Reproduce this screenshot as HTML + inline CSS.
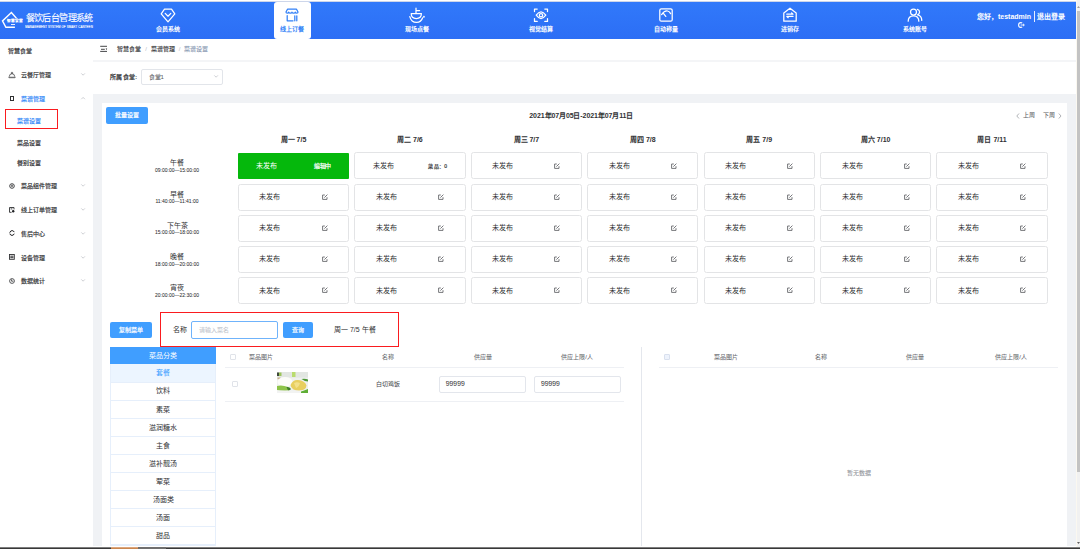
<!DOCTYPE html><html lang="zh-CN"><head><meta charset="utf-8"><style>
html,body{margin:0;padding:0;width:1080px;height:549px;overflow:hidden;background:#fff;font-family:"Liberation Sans", sans-serif;position:relative}
.t{position:absolute;white-space:nowrap;-webkit-text-stroke:0.05px currentColor}
.b{position:absolute;box-sizing:border-box}
svg{position:absolute;overflow:visible}
</style></head><body>
<div class="b" style="left:0px;top:1px;width:1076px;height:1px;background:#cdd6ea"></div>
<div class="b" style="left:0px;top:2px;width:1076px;height:37px;background:linear-gradient(#3179fa,#2c6ef5)"></div>
<svg style="left:0;top:0" width="30" height="39" viewBox="0 0 30 39"><path d="M16.4 18.3 L11.4 12.6 L2.5 20.9 L5.9 27.3 L14.9 27.3" fill="none" stroke="#fff" stroke-width="1.4" stroke-linejoin="miter"/></svg>
<div class="t" style="left:6.9px;top:19.7px;font-size:3.6px;line-height:3.6px;color:#fff;-webkit-text-stroke:0.25px #fff;letter-spacing:0.1px;">智慧食堂</div>
<div class="b" style="left:11.4px;top:23.9px;width:3.5px;height:1.3px;background:#fff;opacity:.9"></div>
<div class="t" style="left:25.7px;top:13.6px;font-size:9px;line-height:9px;color:#fff;-webkit-text-stroke:0;letter-spacing:-0.6px;-webkit-text-stroke:0.12px #fff;">餐饮后台管理系统</div>
<div class="t" style="left:25.2px;top:26.1px;font-size:2.9px;line-height:2.9px;color:#fff;letter-spacing:0.12px;-webkit-text-stroke:0.1px #fff;">MANAGEMENT SYSTEM OF SMART CANTEEN</div>
<div class="b" style="left:274px;top:1.5px;width:37px;height:37px;background:#fff;border-radius:3px"></div>
<div class="t" style="left:68.0px;width:200px;text-align:center;top:26px;font-size:6px;line-height:6px;color:#fff;font-weight:bold;-webkit-text-stroke:0;">会员系统</div>
<div class="t" style="left:192.45px;width:200px;text-align:center;top:26px;font-size:6px;line-height:6px;color:#3584f7;font-weight:bold;-webkit-text-stroke:0;">线上订餐</div>
<div class="t" style="left:316.9px;width:200px;text-align:center;top:26px;font-size:6px;line-height:6px;color:#fff;font-weight:bold;-webkit-text-stroke:0;">现场点餐</div>
<div class="t" style="left:441.35px;width:200px;text-align:center;top:26px;font-size:6px;line-height:6px;color:#fff;font-weight:bold;-webkit-text-stroke:0;">视觉结算</div>
<div class="t" style="left:565.8px;width:200px;text-align:center;top:26px;font-size:6px;line-height:6px;color:#fff;font-weight:bold;-webkit-text-stroke:0;">自动称量</div>
<div class="t" style="left:690.25px;width:200px;text-align:center;top:26px;font-size:6px;line-height:6px;color:#fff;font-weight:bold;-webkit-text-stroke:0;">进销存</div>
<div class="t" style="left:814.7px;width:200px;text-align:center;top:26px;font-size:6px;line-height:6px;color:#fff;font-weight:bold;-webkit-text-stroke:0;">系统账号</div>
<svg style="left:160.0px;top:7px" width="16" height="16" viewBox="0 0 16 16" fill="none" stroke="#fff" stroke-width="1.25" stroke-linecap="round" stroke-linejoin="round"><path d="M4.5 2.2 H11.5 L14.8 6.8 L8 14.8 L1.2 6.8 Z"/><path d="M5.2 6.4 L8 9.2 L10.8 6.4"/></svg>
<svg style="left:284.45px;top:7px" width="16" height="16" viewBox="0 0 16 16" fill="none" stroke="#3280f7" stroke-width="1.25" stroke-linecap="round" stroke-linejoin="round"><path d="M3.5 2.2 H12.5 L14 5 Q14 6.2 12.8 6.2 Q11.5 6.2 11.3 5.2 Q11 6.2 9.6 6.2 Q8.3 6.2 8 5.2 Q7.7 6.2 6.4 6.2 Q5 6.2 4.7 5.2 Q4.5 6.2 3.2 6.2 Q2 6.2 2 5 Z"/><path d="M3.2 8.5 V13.8 H9"/><path d="M10.8 8.8 V13.8 M12.8 8.8 V13.8"/></svg>
<svg style="left:408.9px;top:7px" width="16" height="16" viewBox="0 0 16 16" fill="none" stroke="#fff" stroke-width="1.25" stroke-linecap="round" stroke-linejoin="round"><path d="M7 1.2 V6.2 M7 3.6 H10.6"/><path d="M2.2 6.6 H12.4 Q12.4 11.6 7.3 11.6 Q2.2 11.6 2.2 6.6 Z"/><path d="M0.8 9.6 Q2.2 15.4 7.6 15.4 Q12.2 15.4 13.6 10.8"/><circle cx="14.9" cy="9.7" r="0.35"/></svg>
<svg style="left:533.35px;top:7px" width="16" height="16" viewBox="0 0 16 16" fill="none" stroke="#fff" stroke-width="1.25" stroke-linecap="round" stroke-linejoin="round"><path d="M1.5 4.6 V2 H4.2 M11.8 2 H14.5 V4.6 M14.5 11.6 V14.4 H11.8 M4.2 14.4 H1.5 V11.6"/><path d="M3.2 8.2 Q8 1.6 12.8 8.2 Q8 14.8 3.2 8.2 Z"/><circle cx="8" cy="8.2" r="1.7"/></svg>
<svg style="left:657.8px;top:7px" width="16" height="16" viewBox="0 0 16 16" fill="none" stroke="#fff" stroke-width="1.25" stroke-linecap="round" stroke-linejoin="round"><rect x="1.8" y="1.8" width="12.4" height="12.4" rx="1.5"/><path d="M3.6 7.6 Q6.5 3.4 9.5 4 Q11.6 4.6 12.6 6.6"/><path d="M5.6 6.6 L7.8 9.4"/></svg>
<svg style="left:782.25px;top:7px" width="16" height="16" viewBox="0 0 16 16" fill="none" stroke="#fff" stroke-width="1.25" stroke-linecap="round" stroke-linejoin="round"><path d="M1.8 6 L8 1.2 L14.2 6 V14.2 H1.8 Z"/><path d="M4.8 7.2 H11 L9.6 5.9 M11 9.4 H4.8 L6.2 10.7"/></svg>
<svg style="left:906.7px;top:7px" width="16" height="16" viewBox="0 0 16 16" fill="none" stroke="#fff" stroke-width="1.25" stroke-linecap="round" stroke-linejoin="round"><circle cx="6.5" cy="5" r="3"/><path d="M1.2 14.2 Q1.2 8.8 6.5 8.8 Q11.8 8.8 11.8 14.2"/><path d="M10.4 2.4 Q12.6 3 12.6 5 Q12.6 7 10.6 7.8 Q14.6 8.6 14.8 13.4"/></svg>
<div class="t" style="left:977px;top:13px;font-size:7px;line-height:7px;color:#fff;font-weight:bold;-webkit-text-stroke:0;">您好，<b>testadmin</b></div>
<div class="b" style="left:1033.8px;top:11px;width:1px;height:10.5px;background:#e8eeff"></div>
<div class="t" style="left:1037px;top:13px;font-size:7px;line-height:7px;color:#fff;font-weight:bold;-webkit-text-stroke:0;">退出登录</div>
<svg style="left:1017.5px;top:21.5px" width="7" height="6" viewBox="0 0 7 6" fill="none" stroke="#fff" stroke-width="1.1"><path d="M4.2 1.2 Q3.6 0.6 2.8 0.6 Q0.6 0.6 0.6 3 Q0.6 5.4 2.8 5.4 Q3.6 5.4 4.2 4.8"/><path d="M2.6 3 H6.2 M5 1.8 L6.3 3 L5 4.2" stroke-width="0.9"/></svg>
<div class="b" style="left:1076px;top:0px;width:4px;height:549px;background:#f1f1f1;border-left:1px solid #fbf8f0"></div>
<div class="b" style="left:1077px;top:11px;width:3px;height:461px;background:#c3c3c3"></div>
<svg style="left:1077px;top:5px" width="3" height="4"><path d="M0 3 L1.5 1 L3 3 Z" fill="#a0a0a0"/></svg>
<svg style="left:1077px;top:541px" width="3" height="4"><path d="M0 1 L1.5 3 L3 1 Z" fill="#606060"/></svg>
<div class="t" style="left:8px;top:48px;font-size:6px;line-height:6px;color:#303133;-webkit-text-stroke:0.16px currentColor;">智慧食堂</div>
<svg style="left:7.5px;top:70.5px" width="8" height="8" viewBox="0 0 8 8" fill="none" stroke="#303133" stroke-width="0.7"><circle cx="4" cy="1.9" r="0.7"/><path d="M1.3 5.6 A2.7 2.9 0 0 1 6.7 5.6"/><path d="M0.5 6.3 H7.5" stroke-width="0.9"/><path d="M1 7 H7" stroke-width="0.5" stroke="#888"/></svg>
<div class="t" style="left:21.4px;top:72px;font-size:6px;line-height:6px;color:#303133;-webkit-text-stroke:0.16px currentColor;">云餐厅管理</div>
<svg style="left:80.5px;top:72.7px" width="5" height="3"><path d="M0.3 0.4 L2.1 2.2 L3.9 0.4" fill="none" stroke="#b4b7bd" stroke-width="0.65"/></svg>
<div class="b" style="left:9.6px;top:95.9px;width:4.6px;height:5px;border:1px solid #303133;border-left-width:1.7px"></div>
<div class="t" style="left:21px;top:96px;font-size:6px;line-height:6px;color:#2f86f8;-webkit-text-stroke:0.16px currentColor;">菜谱管理</div>
<svg style="left:80.5px;top:96.7px" width="5" height="3"><path d="M0.3 2.2 L2.1 0.4 L3.9 2.2" fill="none" stroke="#b4b7bd" stroke-width="0.65"/></svg>
<div class="b" style="left:4.5px;top:109.2px;width:53.5px;height:19.8px;border:1.5px solid #fa1b1f"></div>
<div class="t" style="left:17.2px;top:118px;font-size:6px;line-height:6px;color:#2f86f8;-webkit-text-stroke:0.16px currentColor;">菜谱设置</div>
<div class="t" style="left:17.2px;top:139.5px;font-size:6px;line-height:6px;color:#303133;-webkit-text-stroke:0.16px currentColor;">菜品设置</div>
<div class="t" style="left:17.2px;top:160.3px;font-size:6px;line-height:6px;color:#303133;-webkit-text-stroke:0.16px currentColor;">餐别设置</div>
<div class="t" style="left:21.4px;top:182.8px;font-size:6px;line-height:6px;color:#303133;-webkit-text-stroke:0.16px currentColor;">菜品组件管理</div>
<svg style="left:80.5px;top:184.0px" width="5" height="3"><path d="M0.3 0.4 L2.1 2.2 L3.9 0.4" fill="none" stroke="#b4b7bd" stroke-width="0.65"/></svg>
<div class="t" style="left:21.4px;top:207.2px;font-size:6px;line-height:6px;color:#303133;-webkit-text-stroke:0.16px currentColor;">线上订单管理</div>
<svg style="left:80.5px;top:208.39999999999998px" width="5" height="3"><path d="M0.3 0.4 L2.1 2.2 L3.9 0.4" fill="none" stroke="#b4b7bd" stroke-width="0.65"/></svg>
<div class="t" style="left:21.4px;top:231px;font-size:6px;line-height:6px;color:#303133;-webkit-text-stroke:0.16px currentColor;">售后中心</div>
<svg style="left:80.5px;top:232.2px" width="5" height="3"><path d="M0.3 0.4 L2.1 2.2 L3.9 0.4" fill="none" stroke="#b4b7bd" stroke-width="0.65"/></svg>
<div class="t" style="left:21.4px;top:254.5px;font-size:6px;line-height:6px;color:#303133;-webkit-text-stroke:0.16px currentColor;">设备管理</div>
<svg style="left:80.5px;top:255.7px" width="5" height="3"><path d="M0.3 0.4 L2.1 2.2 L3.9 0.4" fill="none" stroke="#b4b7bd" stroke-width="0.65"/></svg>
<div class="t" style="left:21.4px;top:278px;font-size:6px;line-height:6px;color:#303133;-webkit-text-stroke:0.16px currentColor;">数据统计</div>
<svg style="left:80.5px;top:279.2px" width="5" height="3"><path d="M0.3 0.4 L2.1 2.2 L3.9 0.4" fill="none" stroke="#b4b7bd" stroke-width="0.65"/></svg>
<svg style="left:8.6px;top:182.5px" width="6" height="6" viewBox="0 0 6 6" fill="none" stroke="#303133" stroke-width="0.9"><circle cx="3" cy="3" r="2.3"/><path d="M3 1.6 V3.6 M2 3 H4" stroke-width="0.8"/></svg>
<svg style="left:8.8px;top:206.6px" width="6" height="6" viewBox="0 0 6 6" fill="none" stroke="#303133" stroke-width="0.9"><path d="M5 2.4 V0.5 H0.5 V5.3 H2.6"/><circle cx="4.2" cy="4.3" r="1.2" fill="#202124" stroke="none"/><path d="M1.6 1.9 H3.4"/></svg>
<svg style="left:8.8px;top:230px" width="6" height="6" viewBox="0 0 6 6" fill="none" stroke="#202124" stroke-width="1"><path d="M0.9 2.3 Q1.6 0.6 3.1 0.6 Q4.6 0.6 5.2 2.1 M5.2 3.7 Q4.6 5.4 3 5.4 Q1.5 5.4 0.9 3.9"/><path d="M0.4 2.9 H1.4" stroke-width="0.8"/></svg>
<svg style="left:8.8px;top:253.6px" width="6" height="6" viewBox="0 0 6 6" fill="none" stroke="#303133" stroke-width="0.9"><rect x="0.5" y="0.5" width="4.8" height="4.8"/><path d="M1.3 2.2 H4.5 M1.3 3.7 H4.5" stroke-width="1"/></svg>
<svg style="left:8.8px;top:277.5px" width="6" height="6" viewBox="0 0 6 6" fill="none" stroke="#303133" stroke-width="0.8"><circle cx="3" cy="3" r="2.4"/><path d="M2.6 1.4 V3.2 H4.3"/></svg>
<svg style="left:100px;top:45px" width="8" height="8" viewBox="0 0 8 8" fill="none" stroke="#303133" stroke-width="0.9"><path d="M0.2 1.3 H7 M1 4.3 H4.8 M0.2 6.4 H7"/><path d="M5.6 3.4 H7.2 L6.4 5 Z" fill="#202020" stroke="none"/></svg>
<div class="t" style="left:117.4px;top:46px;font-size:6px;line-height:6px;color:#303133;-webkit-text-stroke:0.1px currentColor;">智慧食堂</div>
<div class="t" style="left:145.3px;top:46px;font-size:6px;line-height:6px;color:#c0c4cc;">/</div>
<div class="t" style="left:150.7px;top:46px;font-size:6px;line-height:6px;color:#303133;-webkit-text-stroke:0.1px currentColor;">菜谱管理</div>
<div class="t" style="left:178.7px;top:46px;font-size:6px;line-height:6px;color:#c0c4cc;">/</div>
<div class="t" style="left:184px;top:46px;font-size:6px;line-height:6px;color:#8a9ab3;-webkit-text-stroke:0.12px currentColor;">菜谱设置</div>
<div class="b" style="left:93px;top:60px;width:983px;height:1.5px;background:#f4f5f7"></div>
<div class="t" style="left:110px;top:74px;font-size:6px;line-height:6px;color:#303133;-webkit-text-stroke:0.22px currentColor;letter-spacing:0.3px;">所属食堂:</div>
<div class="b" style="left:141px;top:69.3px;width:81.7px;height:16.2px;border:1px solid #e2e5ea;border-radius:2px"></div>
<div class="t" style="left:148.5px;top:74px;font-size:6px;line-height:6px;color:#606266;">食堂1</div>
<svg style="left:214.3px;top:75.3px" width="5" height="3"><path d="M0.3 0.4 L2.1 2.2 L3.9 0.4" fill="none" stroke="#b4b7bd" stroke-width="0.65"/></svg>
<div class="b" style="left:93px;top:94px;width:983px;height:455px;background:#f0f2f5"></div>
<div class="b" style="left:102px;top:103px;width:965px;height:446px;background:#fff"></div>
<div class="b" style="left:106.2px;top:106.7px;width:41.7px;height:17.3px;background:#409eff;border-radius:2px"></div>
<div class="t" style="left:27.0px;width:200px;text-align:center;top:112.3px;font-size:6px;line-height:6px;color:#fff;-webkit-text-stroke:0.2px #fff;">批量设置</div>
<div class="t" style="left:481.29999999999995px;width:200px;text-align:center;top:111.5px;font-size:7px;line-height:7px;color:#303133;font-weight:bold;-webkit-text-stroke:0;letter-spacing:-0.1px;">2021年07月05日-2021年07月11日</div>
<svg style="left:1016px;top:112.5px" width="4" height="6"><path d="M3 0.5 L0.8 3 L3 5.5" fill="none" stroke="#909399" stroke-width="0.7"/></svg>
<div class="t" style="left:1022.8px;top:112px;font-size:6px;line-height:6px;color:#606266;">上周</div>
<div class="t" style="left:1043.3px;top:112px;font-size:6px;line-height:6px;color:#606266;">下周</div>
<svg style="left:1058px;top:112.5px" width="4" height="6"><path d="M0.8 0.5 L3 3 L0.8 5.5" fill="none" stroke="#909399" stroke-width="0.7"/></svg>
<div class="t" style="left:193.5px;width:200px;text-align:center;top:136px;font-size:7px;line-height:7px;color:#303133;font-weight:bold;-webkit-text-stroke:0;">周一 7/5</div>
<div class="t" style="left:309.93000000000006px;width:200px;text-align:center;top:136px;font-size:7px;line-height:7px;color:#303133;font-weight:bold;-webkit-text-stroke:0;">周二 7/6</div>
<div class="t" style="left:426.36px;width:200px;text-align:center;top:136px;font-size:7px;line-height:7px;color:#303133;font-weight:bold;-webkit-text-stroke:0;">周三 7/7</div>
<div class="t" style="left:542.7900000000001px;width:200px;text-align:center;top:136px;font-size:7px;line-height:7px;color:#303133;font-weight:bold;-webkit-text-stroke:0;">周四 7/8</div>
<div class="t" style="left:659.22px;width:200px;text-align:center;top:136px;font-size:7px;line-height:7px;color:#303133;font-weight:bold;-webkit-text-stroke:0;">周五 7/9</div>
<div class="t" style="left:775.6500000000001px;width:200px;text-align:center;top:136px;font-size:7px;line-height:7px;color:#303133;font-weight:bold;-webkit-text-stroke:0;">周六 7/10</div>
<div class="t" style="left:892.08px;width:200px;text-align:center;top:136px;font-size:7px;line-height:7px;color:#303133;font-weight:bold;-webkit-text-stroke:0;">周日 7/11</div>
<div class="t" style="left:77.0px;width:200px;text-align:center;top:159.3px;font-size:7px;line-height:7px;color:#303133;-webkit-text-stroke:0;">午餐</div>
<div class="t" style="left:77.0px;width:200px;text-align:center;top:167.9px;font-size:5px;line-height:5px;color:#303133;">09:00:00—15:00:00</div>
<div class="b" style="left:237.9px;top:153.0px;width:111.2px;height:26.1px;background:#05b80c;border-radius:1px;display:flex;justify-content:space-around;align-items:center"><span style="font-size:7px;line-height:7px;color:#fff;position:relative;top:-0.6px">未发布</span><span style="font-size:6px;line-height:6px;color:#fff;letter-spacing:-0.5px;position:relative;top:-0.2px;-webkit-text-stroke:0.2px #fff">编辑中</span></div>
<div class="b" style="left:354.33000000000004px;top:152.3px;width:111.2px;height:27px;background:#fff;border:1px solid #e3e4e6;border-radius:2.5px;display:flex;justify-content:space-around;align-items:center"><span style="font-size:7px;line-height:7px;color:#303133;position:relative;top:-0.6px">未发布</span><span style="font-size:5px;line-height:5px;color:#303133;letter-spacing:0.25px;position:relative;top:0.4px;-webkit-text-stroke:0.2px #303133">菜品：0</span></div>
<div class="b" style="left:470.76px;top:152.3px;width:111.2px;height:27px;background:#fff;border:1px solid #e3e4e6;border-radius:2.5px;display:flex;justify-content:space-around;align-items:center"><span style="font-size:7px;line-height:7px;color:#303133;position:relative;top:-0.6px">未发布</span><svg width="6" height="6" viewBox="0 0 6 6" style="position:relative;top:-0.3px;display:block" fill="none" stroke="#66686c" stroke-width="0.9"><path d="M5 3.2 V5.4 H0.6 V1 H2.8"/><path d="M2.4 3.6 L5.4 0.6"/></svg></div>
<div class="b" style="left:587.19px;top:152.3px;width:111.2px;height:27px;background:#fff;border:1px solid #e3e4e6;border-radius:2.5px;display:flex;justify-content:space-around;align-items:center"><span style="font-size:7px;line-height:7px;color:#303133;position:relative;top:-0.6px">未发布</span><svg width="6" height="6" viewBox="0 0 6 6" style="position:relative;top:-0.3px;display:block" fill="none" stroke="#66686c" stroke-width="0.9"><path d="M5 3.2 V5.4 H0.6 V1 H2.8"/><path d="M2.4 3.6 L5.4 0.6"/></svg></div>
<div class="b" style="left:703.62px;top:152.3px;width:111.2px;height:27px;background:#fff;border:1px solid #e3e4e6;border-radius:2.5px;display:flex;justify-content:space-around;align-items:center"><span style="font-size:7px;line-height:7px;color:#303133;position:relative;top:-0.6px">未发布</span><svg width="6" height="6" viewBox="0 0 6 6" style="position:relative;top:-0.3px;display:block" fill="none" stroke="#66686c" stroke-width="0.9"><path d="M5 3.2 V5.4 H0.6 V1 H2.8"/><path d="M2.4 3.6 L5.4 0.6"/></svg></div>
<div class="b" style="left:820.0500000000001px;top:152.3px;width:111.2px;height:27px;background:#fff;border:1px solid #e3e4e6;border-radius:2.5px;display:flex;justify-content:space-around;align-items:center"><span style="font-size:7px;line-height:7px;color:#303133;position:relative;top:-0.6px">未发布</span><svg width="6" height="6" viewBox="0 0 6 6" style="position:relative;top:-0.3px;display:block" fill="none" stroke="#66686c" stroke-width="0.9"><path d="M5 3.2 V5.4 H0.6 V1 H2.8"/><path d="M2.4 3.6 L5.4 0.6"/></svg></div>
<div class="b" style="left:936.48px;top:152.3px;width:111.2px;height:27px;background:#fff;border:1px solid #e3e4e6;border-radius:2.5px;display:flex;justify-content:space-around;align-items:center"><span style="font-size:7px;line-height:7px;color:#303133;position:relative;top:-0.6px">未发布</span><svg width="6" height="6" viewBox="0 0 6 6" style="position:relative;top:-0.3px;display:block" fill="none" stroke="#66686c" stroke-width="0.9"><path d="M5 3.2 V5.4 H0.6 V1 H2.8"/><path d="M2.4 3.6 L5.4 0.6"/></svg></div>
<div class="t" style="left:77.0px;width:200px;text-align:center;top:190.5px;font-size:7px;line-height:7px;color:#303133;-webkit-text-stroke:0;">早餐</div>
<div class="t" style="left:77.0px;width:200px;text-align:center;top:199.1px;font-size:5px;line-height:5px;color:#303133;">11:40:00—11:41:00</div>
<div class="b" style="left:237.9px;top:183.5px;width:111.2px;height:27px;background:#fff;border:1px solid #e3e4e6;border-radius:2.5px;display:flex;justify-content:space-around;align-items:center"><span style="font-size:7px;line-height:7px;color:#303133;position:relative;top:-0.6px">未发布</span><svg width="6" height="6" viewBox="0 0 6 6" style="position:relative;top:-0.3px;display:block" fill="none" stroke="#66686c" stroke-width="0.9"><path d="M5 3.2 V5.4 H0.6 V1 H2.8"/><path d="M2.4 3.6 L5.4 0.6"/></svg></div>
<div class="b" style="left:354.33000000000004px;top:183.5px;width:111.2px;height:27px;background:#fff;border:1px solid #e3e4e6;border-radius:2.5px;display:flex;justify-content:space-around;align-items:center"><span style="font-size:7px;line-height:7px;color:#303133;position:relative;top:-0.6px">未发布</span><svg width="6" height="6" viewBox="0 0 6 6" style="position:relative;top:-0.3px;display:block" fill="none" stroke="#66686c" stroke-width="0.9"><path d="M5 3.2 V5.4 H0.6 V1 H2.8"/><path d="M2.4 3.6 L5.4 0.6"/></svg></div>
<div class="b" style="left:470.76px;top:183.5px;width:111.2px;height:27px;background:#fff;border:1px solid #e3e4e6;border-radius:2.5px;display:flex;justify-content:space-around;align-items:center"><span style="font-size:7px;line-height:7px;color:#303133;position:relative;top:-0.6px">未发布</span><svg width="6" height="6" viewBox="0 0 6 6" style="position:relative;top:-0.3px;display:block" fill="none" stroke="#66686c" stroke-width="0.9"><path d="M5 3.2 V5.4 H0.6 V1 H2.8"/><path d="M2.4 3.6 L5.4 0.6"/></svg></div>
<div class="b" style="left:587.19px;top:183.5px;width:111.2px;height:27px;background:#fff;border:1px solid #e3e4e6;border-radius:2.5px;display:flex;justify-content:space-around;align-items:center"><span style="font-size:7px;line-height:7px;color:#303133;position:relative;top:-0.6px">未发布</span><svg width="6" height="6" viewBox="0 0 6 6" style="position:relative;top:-0.3px;display:block" fill="none" stroke="#66686c" stroke-width="0.9"><path d="M5 3.2 V5.4 H0.6 V1 H2.8"/><path d="M2.4 3.6 L5.4 0.6"/></svg></div>
<div class="b" style="left:703.62px;top:183.5px;width:111.2px;height:27px;background:#fff;border:1px solid #e3e4e6;border-radius:2.5px;display:flex;justify-content:space-around;align-items:center"><span style="font-size:7px;line-height:7px;color:#303133;position:relative;top:-0.6px">未发布</span><svg width="6" height="6" viewBox="0 0 6 6" style="position:relative;top:-0.3px;display:block" fill="none" stroke="#66686c" stroke-width="0.9"><path d="M5 3.2 V5.4 H0.6 V1 H2.8"/><path d="M2.4 3.6 L5.4 0.6"/></svg></div>
<div class="b" style="left:820.0500000000001px;top:183.5px;width:111.2px;height:27px;background:#fff;border:1px solid #e3e4e6;border-radius:2.5px;display:flex;justify-content:space-around;align-items:center"><span style="font-size:7px;line-height:7px;color:#303133;position:relative;top:-0.6px">未发布</span><svg width="6" height="6" viewBox="0 0 6 6" style="position:relative;top:-0.3px;display:block" fill="none" stroke="#66686c" stroke-width="0.9"><path d="M5 3.2 V5.4 H0.6 V1 H2.8"/><path d="M2.4 3.6 L5.4 0.6"/></svg></div>
<div class="b" style="left:936.48px;top:183.5px;width:111.2px;height:27px;background:#fff;border:1px solid #e3e4e6;border-radius:2.5px;display:flex;justify-content:space-around;align-items:center"><span style="font-size:7px;line-height:7px;color:#303133;position:relative;top:-0.6px">未发布</span><svg width="6" height="6" viewBox="0 0 6 6" style="position:relative;top:-0.3px;display:block" fill="none" stroke="#66686c" stroke-width="0.9"><path d="M5 3.2 V5.4 H0.6 V1 H2.8"/><path d="M2.4 3.6 L5.4 0.6"/></svg></div>
<div class="t" style="left:77.0px;width:200px;text-align:center;top:221.70000000000002px;font-size:7px;line-height:7px;color:#303133;-webkit-text-stroke:0;">下午茶</div>
<div class="t" style="left:77.0px;width:200px;text-align:center;top:230.3px;font-size:5px;line-height:5px;color:#303133;">15:00:00—18:00:00</div>
<div class="b" style="left:237.9px;top:214.70000000000002px;width:111.2px;height:27px;background:#fff;border:1px solid #e3e4e6;border-radius:2.5px;display:flex;justify-content:space-around;align-items:center"><span style="font-size:7px;line-height:7px;color:#303133;position:relative;top:-0.6px">未发布</span><svg width="6" height="6" viewBox="0 0 6 6" style="position:relative;top:-0.3px;display:block" fill="none" stroke="#66686c" stroke-width="0.9"><path d="M5 3.2 V5.4 H0.6 V1 H2.8"/><path d="M2.4 3.6 L5.4 0.6"/></svg></div>
<div class="b" style="left:354.33000000000004px;top:214.70000000000002px;width:111.2px;height:27px;background:#fff;border:1px solid #e3e4e6;border-radius:2.5px;display:flex;justify-content:space-around;align-items:center"><span style="font-size:7px;line-height:7px;color:#303133;position:relative;top:-0.6px">未发布</span><svg width="6" height="6" viewBox="0 0 6 6" style="position:relative;top:-0.3px;display:block" fill="none" stroke="#66686c" stroke-width="0.9"><path d="M5 3.2 V5.4 H0.6 V1 H2.8"/><path d="M2.4 3.6 L5.4 0.6"/></svg></div>
<div class="b" style="left:470.76px;top:214.70000000000002px;width:111.2px;height:27px;background:#fff;border:1px solid #e3e4e6;border-radius:2.5px;display:flex;justify-content:space-around;align-items:center"><span style="font-size:7px;line-height:7px;color:#303133;position:relative;top:-0.6px">未发布</span><svg width="6" height="6" viewBox="0 0 6 6" style="position:relative;top:-0.3px;display:block" fill="none" stroke="#66686c" stroke-width="0.9"><path d="M5 3.2 V5.4 H0.6 V1 H2.8"/><path d="M2.4 3.6 L5.4 0.6"/></svg></div>
<div class="b" style="left:587.19px;top:214.70000000000002px;width:111.2px;height:27px;background:#fff;border:1px solid #e3e4e6;border-radius:2.5px;display:flex;justify-content:space-around;align-items:center"><span style="font-size:7px;line-height:7px;color:#303133;position:relative;top:-0.6px">未发布</span><svg width="6" height="6" viewBox="0 0 6 6" style="position:relative;top:-0.3px;display:block" fill="none" stroke="#66686c" stroke-width="0.9"><path d="M5 3.2 V5.4 H0.6 V1 H2.8"/><path d="M2.4 3.6 L5.4 0.6"/></svg></div>
<div class="b" style="left:703.62px;top:214.70000000000002px;width:111.2px;height:27px;background:#fff;border:1px solid #e3e4e6;border-radius:2.5px;display:flex;justify-content:space-around;align-items:center"><span style="font-size:7px;line-height:7px;color:#303133;position:relative;top:-0.6px">未发布</span><svg width="6" height="6" viewBox="0 0 6 6" style="position:relative;top:-0.3px;display:block" fill="none" stroke="#66686c" stroke-width="0.9"><path d="M5 3.2 V5.4 H0.6 V1 H2.8"/><path d="M2.4 3.6 L5.4 0.6"/></svg></div>
<div class="b" style="left:820.0500000000001px;top:214.70000000000002px;width:111.2px;height:27px;background:#fff;border:1px solid #e3e4e6;border-radius:2.5px;display:flex;justify-content:space-around;align-items:center"><span style="font-size:7px;line-height:7px;color:#303133;position:relative;top:-0.6px">未发布</span><svg width="6" height="6" viewBox="0 0 6 6" style="position:relative;top:-0.3px;display:block" fill="none" stroke="#66686c" stroke-width="0.9"><path d="M5 3.2 V5.4 H0.6 V1 H2.8"/><path d="M2.4 3.6 L5.4 0.6"/></svg></div>
<div class="b" style="left:936.48px;top:214.70000000000002px;width:111.2px;height:27px;background:#fff;border:1px solid #e3e4e6;border-radius:2.5px;display:flex;justify-content:space-around;align-items:center"><span style="font-size:7px;line-height:7px;color:#303133;position:relative;top:-0.6px">未发布</span><svg width="6" height="6" viewBox="0 0 6 6" style="position:relative;top:-0.3px;display:block" fill="none" stroke="#66686c" stroke-width="0.9"><path d="M5 3.2 V5.4 H0.6 V1 H2.8"/><path d="M2.4 3.6 L5.4 0.6"/></svg></div>
<div class="t" style="left:77.0px;width:200px;text-align:center;top:252.9px;font-size:7px;line-height:7px;color:#303133;-webkit-text-stroke:0;">晚餐</div>
<div class="t" style="left:77.0px;width:200px;text-align:center;top:261.5px;font-size:5px;line-height:5px;color:#303133;">18:00:00—20:00:00</div>
<div class="b" style="left:237.9px;top:245.9px;width:111.2px;height:27px;background:#fff;border:1px solid #e3e4e6;border-radius:2.5px;display:flex;justify-content:space-around;align-items:center"><span style="font-size:7px;line-height:7px;color:#303133;position:relative;top:-0.6px">未发布</span><svg width="6" height="6" viewBox="0 0 6 6" style="position:relative;top:-0.3px;display:block" fill="none" stroke="#66686c" stroke-width="0.9"><path d="M5 3.2 V5.4 H0.6 V1 H2.8"/><path d="M2.4 3.6 L5.4 0.6"/></svg></div>
<div class="b" style="left:354.33000000000004px;top:245.9px;width:111.2px;height:27px;background:#fff;border:1px solid #e3e4e6;border-radius:2.5px;display:flex;justify-content:space-around;align-items:center"><span style="font-size:7px;line-height:7px;color:#303133;position:relative;top:-0.6px">未发布</span><svg width="6" height="6" viewBox="0 0 6 6" style="position:relative;top:-0.3px;display:block" fill="none" stroke="#66686c" stroke-width="0.9"><path d="M5 3.2 V5.4 H0.6 V1 H2.8"/><path d="M2.4 3.6 L5.4 0.6"/></svg></div>
<div class="b" style="left:470.76px;top:245.9px;width:111.2px;height:27px;background:#fff;border:1px solid #e3e4e6;border-radius:2.5px;display:flex;justify-content:space-around;align-items:center"><span style="font-size:7px;line-height:7px;color:#303133;position:relative;top:-0.6px">未发布</span><svg width="6" height="6" viewBox="0 0 6 6" style="position:relative;top:-0.3px;display:block" fill="none" stroke="#66686c" stroke-width="0.9"><path d="M5 3.2 V5.4 H0.6 V1 H2.8"/><path d="M2.4 3.6 L5.4 0.6"/></svg></div>
<div class="b" style="left:587.19px;top:245.9px;width:111.2px;height:27px;background:#fff;border:1px solid #e3e4e6;border-radius:2.5px;display:flex;justify-content:space-around;align-items:center"><span style="font-size:7px;line-height:7px;color:#303133;position:relative;top:-0.6px">未发布</span><svg width="6" height="6" viewBox="0 0 6 6" style="position:relative;top:-0.3px;display:block" fill="none" stroke="#66686c" stroke-width="0.9"><path d="M5 3.2 V5.4 H0.6 V1 H2.8"/><path d="M2.4 3.6 L5.4 0.6"/></svg></div>
<div class="b" style="left:703.62px;top:245.9px;width:111.2px;height:27px;background:#fff;border:1px solid #e3e4e6;border-radius:2.5px;display:flex;justify-content:space-around;align-items:center"><span style="font-size:7px;line-height:7px;color:#303133;position:relative;top:-0.6px">未发布</span><svg width="6" height="6" viewBox="0 0 6 6" style="position:relative;top:-0.3px;display:block" fill="none" stroke="#66686c" stroke-width="0.9"><path d="M5 3.2 V5.4 H0.6 V1 H2.8"/><path d="M2.4 3.6 L5.4 0.6"/></svg></div>
<div class="b" style="left:820.0500000000001px;top:245.9px;width:111.2px;height:27px;background:#fff;border:1px solid #e3e4e6;border-radius:2.5px;display:flex;justify-content:space-around;align-items:center"><span style="font-size:7px;line-height:7px;color:#303133;position:relative;top:-0.6px">未发布</span><svg width="6" height="6" viewBox="0 0 6 6" style="position:relative;top:-0.3px;display:block" fill="none" stroke="#66686c" stroke-width="0.9"><path d="M5 3.2 V5.4 H0.6 V1 H2.8"/><path d="M2.4 3.6 L5.4 0.6"/></svg></div>
<div class="b" style="left:936.48px;top:245.9px;width:111.2px;height:27px;background:#fff;border:1px solid #e3e4e6;border-radius:2.5px;display:flex;justify-content:space-around;align-items:center"><span style="font-size:7px;line-height:7px;color:#303133;position:relative;top:-0.6px">未发布</span><svg width="6" height="6" viewBox="0 0 6 6" style="position:relative;top:-0.3px;display:block" fill="none" stroke="#66686c" stroke-width="0.9"><path d="M5 3.2 V5.4 H0.6 V1 H2.8"/><path d="M2.4 3.6 L5.4 0.6"/></svg></div>
<div class="t" style="left:77.0px;width:200px;text-align:center;top:284.1px;font-size:7px;line-height:7px;color:#303133;-webkit-text-stroke:0;">宵夜</div>
<div class="t" style="left:77.0px;width:200px;text-align:center;top:292.70000000000005px;font-size:5px;line-height:5px;color:#303133;">20:00:00—22:30:00</div>
<div class="b" style="left:237.9px;top:277.1px;width:111.2px;height:27px;background:#fff;border:1px solid #e3e4e6;border-radius:2.5px;display:flex;justify-content:space-around;align-items:center"><span style="font-size:7px;line-height:7px;color:#303133;position:relative;top:-0.6px">未发布</span><svg width="6" height="6" viewBox="0 0 6 6" style="position:relative;top:-0.3px;display:block" fill="none" stroke="#66686c" stroke-width="0.9"><path d="M5 3.2 V5.4 H0.6 V1 H2.8"/><path d="M2.4 3.6 L5.4 0.6"/></svg></div>
<div class="b" style="left:354.33000000000004px;top:277.1px;width:111.2px;height:27px;background:#fff;border:1px solid #e3e4e6;border-radius:2.5px;display:flex;justify-content:space-around;align-items:center"><span style="font-size:7px;line-height:7px;color:#303133;position:relative;top:-0.6px">未发布</span><svg width="6" height="6" viewBox="0 0 6 6" style="position:relative;top:-0.3px;display:block" fill="none" stroke="#66686c" stroke-width="0.9"><path d="M5 3.2 V5.4 H0.6 V1 H2.8"/><path d="M2.4 3.6 L5.4 0.6"/></svg></div>
<div class="b" style="left:470.76px;top:277.1px;width:111.2px;height:27px;background:#fff;border:1px solid #e3e4e6;border-radius:2.5px;display:flex;justify-content:space-around;align-items:center"><span style="font-size:7px;line-height:7px;color:#303133;position:relative;top:-0.6px">未发布</span><svg width="6" height="6" viewBox="0 0 6 6" style="position:relative;top:-0.3px;display:block" fill="none" stroke="#66686c" stroke-width="0.9"><path d="M5 3.2 V5.4 H0.6 V1 H2.8"/><path d="M2.4 3.6 L5.4 0.6"/></svg></div>
<div class="b" style="left:587.19px;top:277.1px;width:111.2px;height:27px;background:#fff;border:1px solid #e3e4e6;border-radius:2.5px;display:flex;justify-content:space-around;align-items:center"><span style="font-size:7px;line-height:7px;color:#303133;position:relative;top:-0.6px">未发布</span><svg width="6" height="6" viewBox="0 0 6 6" style="position:relative;top:-0.3px;display:block" fill="none" stroke="#66686c" stroke-width="0.9"><path d="M5 3.2 V5.4 H0.6 V1 H2.8"/><path d="M2.4 3.6 L5.4 0.6"/></svg></div>
<div class="b" style="left:703.62px;top:277.1px;width:111.2px;height:27px;background:#fff;border:1px solid #e3e4e6;border-radius:2.5px;display:flex;justify-content:space-around;align-items:center"><span style="font-size:7px;line-height:7px;color:#303133;position:relative;top:-0.6px">未发布</span><svg width="6" height="6" viewBox="0 0 6 6" style="position:relative;top:-0.3px;display:block" fill="none" stroke="#66686c" stroke-width="0.9"><path d="M5 3.2 V5.4 H0.6 V1 H2.8"/><path d="M2.4 3.6 L5.4 0.6"/></svg></div>
<div class="b" style="left:820.0500000000001px;top:277.1px;width:111.2px;height:27px;background:#fff;border:1px solid #e3e4e6;border-radius:2.5px;display:flex;justify-content:space-around;align-items:center"><span style="font-size:7px;line-height:7px;color:#303133;position:relative;top:-0.6px">未发布</span><svg width="6" height="6" viewBox="0 0 6 6" style="position:relative;top:-0.3px;display:block" fill="none" stroke="#66686c" stroke-width="0.9"><path d="M5 3.2 V5.4 H0.6 V1 H2.8"/><path d="M2.4 3.6 L5.4 0.6"/></svg></div>
<div class="b" style="left:936.48px;top:277.1px;width:111.2px;height:27px;background:#fff;border:1px solid #e3e4e6;border-radius:2.5px;display:flex;justify-content:space-around;align-items:center"><span style="font-size:7px;line-height:7px;color:#303133;position:relative;top:-0.6px">未发布</span><svg width="6" height="6" viewBox="0 0 6 6" style="position:relative;top:-0.3px;display:block" fill="none" stroke="#66686c" stroke-width="0.9"><path d="M5 3.2 V5.4 H0.6 V1 H2.8"/><path d="M2.4 3.6 L5.4 0.6"/></svg></div>
<div class="b" style="left:110px;top:321.6px;width:41.9px;height:16.7px;background:#409eff;border-radius:2px"></div>
<div class="t" style="left:31.0px;width:200px;text-align:center;top:327px;font-size:6px;line-height:6px;color:#fff;-webkit-text-stroke:0.2px #fff;">复制菜单</div>
<div class="b" style="left:160px;top:312px;width:238.8px;height:35px;border:1.6px solid #fa1b1f"></div>
<div class="t" style="left:172.6px;top:326px;font-size:7px;line-height:7px;color:#303133;-webkit-text-stroke:0;">名称</div>
<div class="b" style="left:191.1px;top:321.3px;width:87.4px;height:17.5px;border:1px solid #6fb3fb;border-radius:2px"></div>
<div class="t" style="left:198.5px;top:327px;font-size:6px;line-height:6px;color:#c0c4cc;">请输入菜名</div>
<div class="b" style="left:283px;top:321.6px;width:29.9px;height:16.7px;background:#409eff;border-radius:2px"></div>
<div class="t" style="left:198.0px;width:200px;text-align:center;top:327px;font-size:6px;line-height:6px;color:#fff;-webkit-text-stroke:0.2px #fff;">查询</div>
<div class="t" style="left:334px;top:326px;font-size:7px;line-height:7px;color:#303133;-webkit-text-stroke:0;">周一 7/5 午餐</div>
<div class="b" style="left:110px;top:347.2px;width:106.3px;height:16.4px;background:#409eff"></div>
<div class="t" style="left:63.19999999999999px;width:200px;text-align:center;top:352px;font-size:7px;line-height:7px;color:#fff;-webkit-text-stroke:0;">菜品分类</div>
<div class="b" style="left:110px;top:364px;width:106.3px;height:180.5px;border:1px solid #e6effb;border-top:none"></div>
<div class="b" style="left:111px;top:364px;width:104.3px;height:18px;background:#ecf5ff"></div>
<div class="b" style="left:110px;top:381.5px;width:106.3px;height:1px;background:#e6effb"></div>
<div class="t" style="left:63.19999999999999px;width:200px;text-align:center;top:369.3px;font-size:7px;line-height:7px;color:#409eff;-webkit-text-stroke:0;">套餐</div>
<div class="b" style="left:110px;top:399.5px;width:106.3px;height:1px;background:#e6effb"></div>
<div class="t" style="left:63.19999999999999px;width:200px;text-align:center;top:387.40000000000003px;font-size:7px;line-height:7px;color:#303133;-webkit-text-stroke:0;">饮料</div>
<div class="b" style="left:110px;top:417.5px;width:106.3px;height:1px;background:#e6effb"></div>
<div class="t" style="left:63.19999999999999px;width:200px;text-align:center;top:405.5px;font-size:7px;line-height:7px;color:#303133;-webkit-text-stroke:0;">素菜</div>
<div class="b" style="left:110px;top:435.5px;width:106.3px;height:1px;background:#e6effb"></div>
<div class="t" style="left:63.19999999999999px;width:200px;text-align:center;top:423.6px;font-size:7px;line-height:7px;color:#303133;-webkit-text-stroke:0;">滋润糖水</div>
<div class="b" style="left:110px;top:453.5px;width:106.3px;height:1px;background:#e6effb"></div>
<div class="t" style="left:63.19999999999999px;width:200px;text-align:center;top:441.7px;font-size:7px;line-height:7px;color:#303133;-webkit-text-stroke:0;">主食</div>
<div class="b" style="left:110px;top:471.5px;width:106.3px;height:1px;background:#e6effb"></div>
<div class="t" style="left:63.19999999999999px;width:200px;text-align:center;top:459.8px;font-size:7px;line-height:7px;color:#303133;-webkit-text-stroke:0;">滋补靓汤</div>
<div class="b" style="left:110px;top:489.5px;width:106.3px;height:1px;background:#e6effb"></div>
<div class="t" style="left:63.19999999999999px;width:200px;text-align:center;top:477.90000000000003px;font-size:7px;line-height:7px;color:#303133;-webkit-text-stroke:0;">荤菜</div>
<div class="b" style="left:110px;top:507.5px;width:106.3px;height:1px;background:#e6effb"></div>
<div class="t" style="left:63.19999999999999px;width:200px;text-align:center;top:496.00000000000006px;font-size:7px;line-height:7px;color:#303133;-webkit-text-stroke:0;">汤面类</div>
<div class="b" style="left:110px;top:525.5px;width:106.3px;height:1px;background:#e6effb"></div>
<div class="t" style="left:63.19999999999999px;width:200px;text-align:center;top:514.1px;font-size:7px;line-height:7px;color:#303133;-webkit-text-stroke:0;">汤面</div>
<div class="b" style="left:110px;top:544.5px;width:106.3px;height:1px;background:#e6effb"></div>
<div class="t" style="left:63.19999999999999px;width:200px;text-align:center;top:532.2px;font-size:7px;line-height:7px;color:#303133;-webkit-text-stroke:0;">甜品</div>
<div class="b" style="left:230.2px;top:353.9px;width:6px;height:6px;border:1px solid #e0e3e9;border-radius:1px"></div>
<div class="t" style="left:249.3px;top:353.5px;font-size:6px;line-height:6px;color:#6a6c70;">菜品图片</div>
<div class="t" style="left:287.5px;width:200px;text-align:center;top:353.5px;font-size:6px;line-height:6px;color:#6a6c70;">名称</div>
<div class="t" style="left:382.8px;width:200px;text-align:center;top:353.5px;font-size:6px;line-height:6px;color:#6a6c70;">供应量</div>
<div class="t" style="left:477.20000000000005px;width:200px;text-align:center;top:353.5px;font-size:6px;line-height:6px;color:#6a6c70;">供应上限/人</div>
<div class="b" style="left:225px;top:366.7px;width:399.4px;height:1px;background:#eef0f4"></div>
<div class="b" style="left:231.7px;top:381.4px;width:6px;height:6px;border:1px solid #e0e3e9;border-radius:1px"></div>
<svg style="left:277px;top:372px" width="31" height="21" viewBox="0 0 31 21"><defs><filter id="bl" x="-20%" y="-20%" width="140%" height="140%"><feGaussianBlur stdDeviation="0.55"/></filter><clipPath id="cp"><rect width="31" height="21"/></clipPath></defs><g clip-path="url(#cp)"><rect width="31" height="21" fill="#eef0ee"/><g filter="url(#bl)"><rect x="0" y="0" width="31" height="5.5" fill="#e2e6e2"/><rect x="0" y="0.5" width="2" height="3.5" fill="#3f4a3a"/><rect x="2" y="0.5" width="2.5" height="3.5" fill="#9cc45a"/><rect x="15" y="0" width="3.5" height="5" fill="#b9dc6e"/><rect x="0.5" y="5.5" width="3" height="1.8" fill="#c7b088"/><ellipse cx="8" cy="10" rx="7.5" ry="5" fill="#fcfcfa"/><path d="M0 14 Q5 12.5 11 15 Q13 17 12 18.5 Q6 19 0 18 Z" fill="#8dc34a"/><path d="M9.5 15 Q12.5 14.5 14 17 Q13 18.5 11 18.5 Z" fill="#3f7f28"/><path d="M13.5 13 Q16 7.5 21 8 Q28 8.5 29.5 13.5 Q29 18.5 22 18.8 Q14.5 18.5 13.5 13 Z" fill="#e8cf5e"/><path d="M17 11 Q20 9.5 23 11 Q22 15 19 16 Z" fill="#f3e08a"/><path d="M24.5 7 Q28.5 6.5 31 7.5 V9.5 Q28 9.5 24.5 7 Z" fill="#4f9a35"/><rect x="0" y="18.6" width="31" height="2.4" fill="#f2f3f2"/><path d="M24 19.5 Q28 18 31 17 V21 H24 Z" fill="#5fae35"/></g></g></svg>
<div class="t" style="left:287.5px;width:200px;text-align:center;top:380.5px;font-size:6px;line-height:6px;color:#4a4c50;">白切鸡饭</div>
<div class="b" style="left:438.9px;top:375.6px;width:86.7px;height:17.2px;border:1px solid #e3e6ec;border-radius:2px"></div>
<div class="t" style="left:445.8px;top:381.2px;font-size:6.8px;line-height:6.8px;color:#3a3b3e;">99999</div>
<div class="b" style="left:534.2px;top:375.6px;width:86.6px;height:17.2px;border:1px solid #e3e6ec;border-radius:2px"></div>
<div class="t" style="left:541px;top:381.2px;font-size:6.8px;line-height:6.8px;color:#3a3b3e;">99999</div>
<div class="b" style="left:225px;top:400.8px;width:399.4px;height:1px;background:#eef0f4"></div>
<div class="b" style="left:641.1px;top:347px;width:1px;height:202px;background:#e4e7ed"></div>
<div class="b" style="left:664.2px;top:353.8px;width:6px;height:6px;border:1px solid #d9e0ee;background:#eef3fc;border-radius:1px"></div>
<div class="t" style="left:626.0px;width:200px;text-align:center;top:353.5px;font-size:6px;line-height:6px;color:#6a6c70;">菜品图片</div>
<div class="t" style="left:721.0px;width:200px;text-align:center;top:353.5px;font-size:6px;line-height:6px;color:#6a6c70;">名称</div>
<div class="t" style="left:815.2px;width:200px;text-align:center;top:353.5px;font-size:6px;line-height:6px;color:#6a6c70;">供应量</div>
<div class="t" style="left:911.0px;width:200px;text-align:center;top:353.5px;font-size:6px;line-height:6px;color:#6a6c70;">供应上限/人</div>
<div class="b" style="left:658.5px;top:366.5px;width:399.3px;height:1px;background:#eef0f4"></div>
<div class="t" style="left:758.8px;width:200px;text-align:center;top:470px;font-size:6px;line-height:6px;color:#909399;">暂无数据</div>
<div class="b" style="left:0px;top:546px;width:1076px;height:1px;background:#fff"></div>
<div class="b" style="left:0px;top:547px;width:1080px;height:1px;background:#7d7d7d"></div>
<div class="b" style="left:0px;top:548px;width:1080px;height:1px;background:#383838"></div>
<div class="b" style="left:111px;top:547px;width:27px;height:1px;background:#dba57d"></div>
<div class="b" style="left:111px;top:548px;width:27px;height:1px;background:#c9864f"></div>
<div class="b" style="left:138px;top:547px;width:28px;height:2px;background:#6e6e6e"></div>
</body></html>
